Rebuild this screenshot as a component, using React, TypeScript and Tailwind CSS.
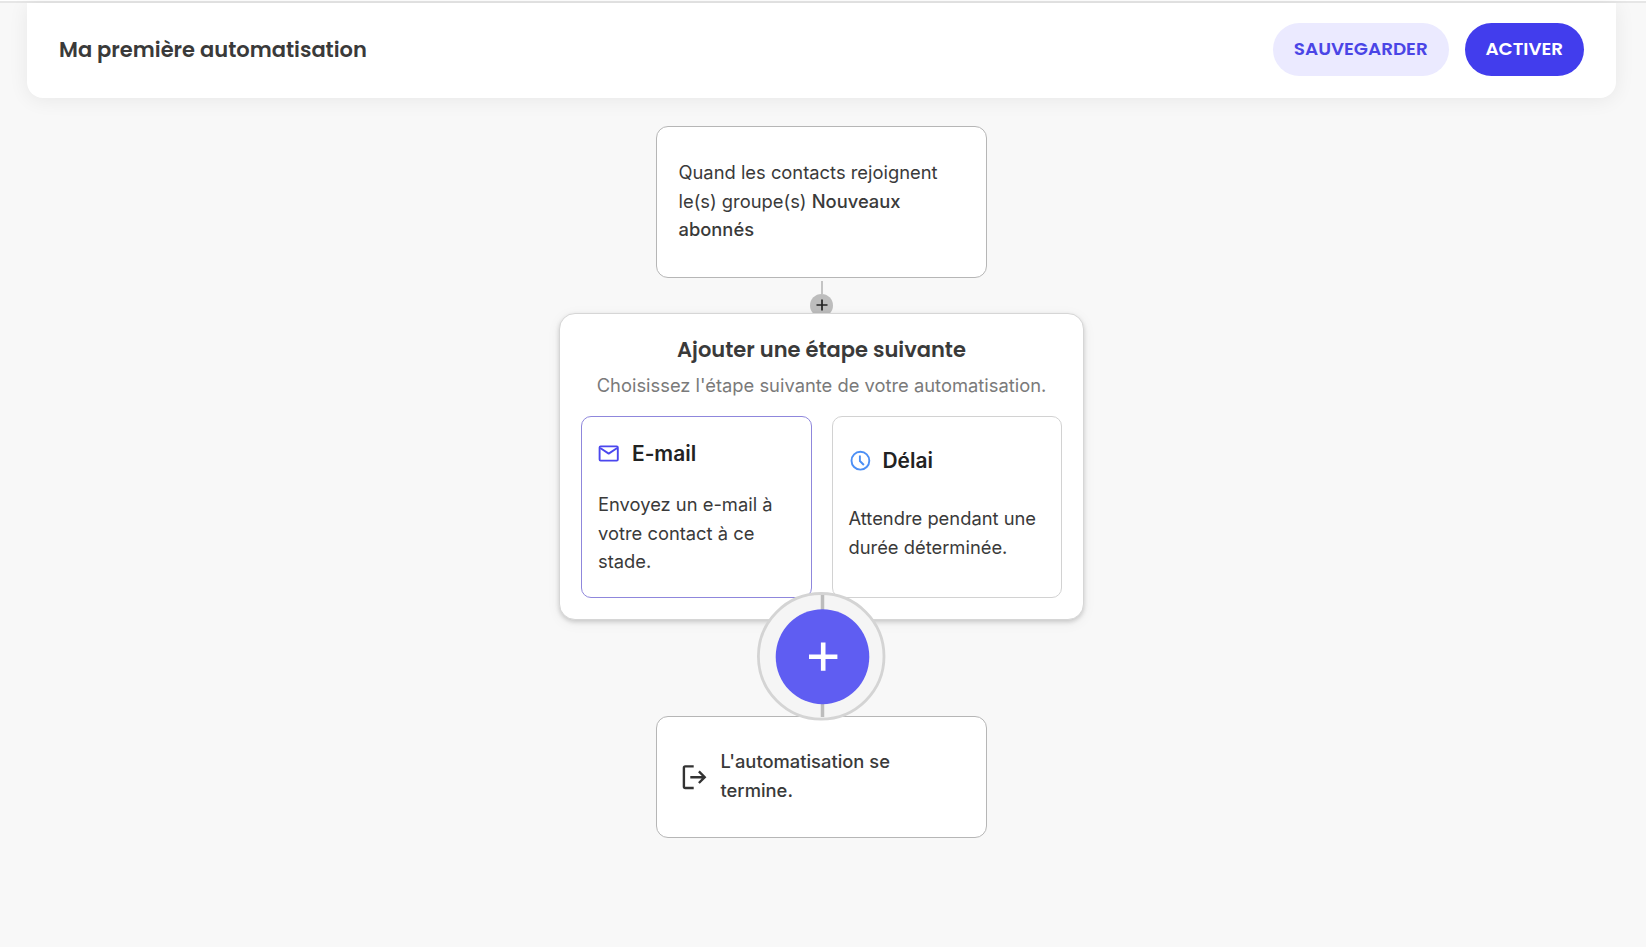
const heading = "font-['Poppins','Inter',sans-serif] [font-feature-settings:'cv11'] whitespace-nowrap";

function MailIcon() {
  return (
    <svg width="22" height="30" viewBox="0 0 22 30" fill="none" stroke="#4b47ee" strokeWidth="1.9" strokeLinejoin="round">
      <rect x="1.6" y="7.4" width="18.2" height="14.2" rx="1" />
      <path d="m2.2 9 8.5 5.6L19.2 9" />
    </svg>
  );
}

function ClockIcon() {
  return (
    <svg width="22" height="30" viewBox="0 0 22 30" fill="none" stroke="#4c8ff5" strokeWidth="1.9">
      <circle cx="11.4" cy="14.7" r="8.9" />
      <path d="M10.9 9.5V15l4 4" />
    </svg>
  );
}

function ExitIcon() {
  return (
    <svg className="mt-[18px] shrink-0" width="26" height="26" viewBox="0 0 26 26" fill="none" stroke="#333" strokeWidth="2.4">
      <path d="M12.7 1.4H4.3Q2.9 1.4 2.9 2.8v18.8q0 1.4 1.4 1.4h8.4M9.3 12.2h14.2M17.9 6.4l5.8 5.8-5.8 5.8" />
    </svg>
  );
}

function AddButton() {
  return (
    <svg className="absolute top-[278px] left-[196px]" width="130" height="130" viewBox="0 0 130 130">
      <circle cx="65.2" cy="64.3" r="62.8" fill="#f5f5f5" stroke="#d4d4d4" strokeWidth="2.8" />
      <path d="M66.5 3v122" stroke="#bcbcbc" strokeWidth="3.5" />
      <ellipse cx="66.5" cy="64.7" rx="46.8" ry="47.5" fill="#5f5df2" />
      <path d="M67.2 50.4v28.4M53 64.8h28.4" stroke="#fff" strokeWidth="4.6" />
    </svg>
  );
}

export default function App() {
  return (
    <div className="flex h-[947px] w-[1646px] flex-col overflow-hidden bg-[#f8f8f8] font-['Inter',sans-serif] text-[#3a3a3a]">
      <div className="h-[3px] w-full shrink-0 border-b-2 border-[#e6e6e6] bg-white" />
      <header className="mr-[30px] ml-[27px] flex h-[95px] shrink-0 items-start justify-between rounded-b-[16px] bg-white pt-[20px] pr-[32px] pl-[32px] shadow-[0_2px_20px_rgba(0,0,0,0.07)]">
        <h1 className={`${heading} pt-[12px] text-[21px] leading-[30px] font-semibold`}>Ma première automatisation</h1>
        <div className="flex gap-4">
          <button className={`${heading} h-[52.5px] w-[175.5px] rounded-full bg-[#ebeaff] text-[18.4px] font-semibold text-[#4a45e6]`}>SAUVEGARDER</button>
          <button className={`${heading} h-[52.5px] w-[119.5px] rounded-full bg-[#423ded] text-[18.4px] font-semibold text-white`}>ACTIVER</button>
        </div>
      </header>
      <main className="flex w-[1643px] flex-col items-center pt-[28px]">
        <section className="h-[152px] w-[331px] rounded-[12px] border border-[#b6b6b6] bg-white px-[21.5px] pt-[31px]">
          <p className="text-[18.35px] leading-[28.7px]">
            Quand les contacts rejoignent
            <br />
            le(s) groupe(s) <b className="font-medium">Nouveaux
            <br />
            abonnés</b>
          </p>
        </section>
        <div className="mt-[3px] flex h-[32px] flex-col items-center">
          <div className="h-[12.5px] w-[2px] shrink-0 bg-[#c4c4c4]" />
          <div className="flex size-[23px] shrink-0 items-center justify-center rounded-full bg-[#bdbdbd]">
            <svg width="12" height="12" viewBox="0 0 12 12" stroke="#222" strokeWidth="1.7">
              <path d="M6 .5v11M.5 6h11" />
            </svg>
          </div>
        </div>
        <section className="relative h-[307px] w-[525px] rounded-[16px] border border-[#d6d6d6] bg-white px-[21px] pt-[21px] shadow-[0_2px_4px_rgba(0,0,0,0.16),0_3px_14px_rgba(0,0,0,0.06)]">
          <h2 className={`${heading} text-center text-[21px] leading-[30px] font-semibold`}>Ajouter une étape suivante</h2>
          <p className="mt-[6px] text-center text-[18.35px] leading-[28px] whitespace-nowrap text-[#7a7a7a]">Choisissez l'étape suivante de votre automatisation.</p>
          <div className="mt-[17px] flex justify-between">
            <article className="h-[182px] w-[230.5px] rounded-[10px] border border-[#8f87dc] bg-white pt-[22px] pl-[16px]">
              <div className="flex items-center gap-[12px]">
                <MailIcon />
                <h3 className="text-[20.9px] leading-[30px] font-semibold text-[#222]">E-mail</h3>
              </div>
              <p className="mt-[21px] text-[18.35px] leading-[28.7px]">
                Envoyez un e-mail à
                <br />
                votre contact à ce
                <br />
                stade.
              </p>
            </article>
            <article className="h-[182px] w-[230.5px] rounded-[10px] border border-[#d2d2d2] bg-white pt-[29px] pl-[16px]">
              <div className="flex items-center gap-[12px]">
                <ClockIcon />
                <h3 className="text-[20.9px] leading-[30px] font-semibold text-[#222]">Délai</h3>
              </div>
              <p className="mt-[28px] text-[18.35px] leading-[28.7px]">
                Attendre pendant une
                <br />
                durée déterminée.
              </p>
            </article>
          </div>
          <AddButton />
        </section>
        <section className="mt-[96px] flex h-[122px] w-[331px] rounded-[12px] border border-[#b6b6b6] bg-white pt-[30px] pl-[24px]">
          <ExitIcon />
          <p className="ml-[13.5px] text-[18.35px] leading-[28.7px] font-medium">
            L'automatisation se
            <br />
            termine.
          </p>
        </section>
      </main>
    </div>
  );
}
